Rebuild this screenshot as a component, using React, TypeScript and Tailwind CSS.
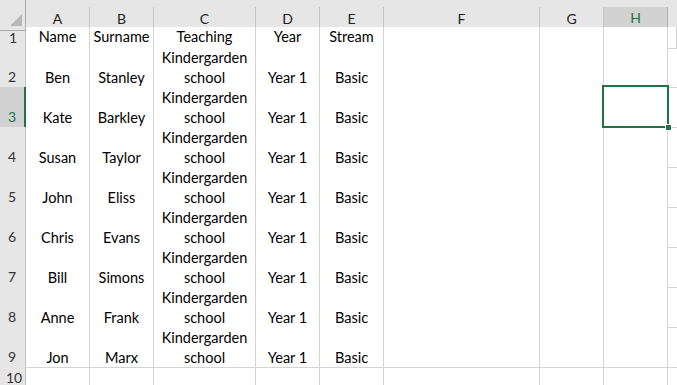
import React from "react";

type Row = [string, string, string, string, string];

const rows: Row[] = [
  ["Ben", "Stanley", "Kindergarden school", "Year 1", "Basic"],
  ["Kate", "Barkley", "Kindergarden school", "Year 1", "Basic"],
  ["Susan", "Taylor", "Kindergarden school", "Year 1", "Basic"],
  ["John", "Eliss", "Kindergarden school", "Year 1", "Basic"],
  ["Chris", "Evans", "Kindergarden school", "Year 1", "Basic"],
  ["Bill", "Simons", "Kindergarden school", "Year 1", "Basic"],
  ["Anne", "Frank", "Kindergarden school", "Year 1", "Basic"],
  ["Jon", "Marx", "Kindergarden school", "Year 1", "Basic"],
];

const cols = ["A", "B", "C", "D", "E", "F", "G", "H"];
const gridCols =
  "grid grid-cols-[26px_64px_64px_102px_64px_64px_156px_64px_64px_1fr]";

const cell = "border-r border-b border-[#d4d4d4] bg-white";

const App: React.FC = () => {
  return (
    <div
      className="w-[677px] h-[385px] overflow-hidden bg-white text-[14.5px] text-black select-none"
      style={{ fontFamily: "Lato, 'Open Sans', sans-serif" }}
    >
      {/* column headers */}
      <div className={`${gridCols} h-[27px] bg-[#e6e6e6]`}>
        <div className="relative border-r border-b border-[#ababab]">
          <div className="absolute right-[3px] bottom-[4px] w-0 h-0 border-l-[12px] border-l-transparent border-b-[12px] border-b-[#b7b7b7]" />
        </div>
        {cols.map((c) => (
          <div key={c} className="flex flex-col border-b border-[#ababab]">
            <div className="h-[7px]" />
            {c === "H" ? (
              <div className="flex-1 flex items-center justify-center bg-[#d2d2d2] border-r border-[#ababab] border-b-2 border-b-[#217346] text-[#217346] text-[14px]">
                {c}
              </div>
            ) : (
              <div className="flex-1 flex items-center justify-center border-r border-[#c6c6c6] text-[#222] text-[14px]">
                {c}
              </div>
            )}
          </div>
        ))}
        <div className="flex flex-col border-b border-[#ababab]">
          <div className="h-[7px]" />
          <div className="flex-1" />
        </div>
      </div>

      {/* row 1 */}
      <div className={`${gridCols} h-[20px]`}>
        <div className="flex items-center pl-[9px] bg-[#e6e6e6] border-r border-b border-[#c6c6c6] text-[#333] text-[14px]">
          1
        </div>
        {["Name", "Surname", "Teaching", "Year", "Stream", "", "", "", ""].map(
          (t, i) => (
            <div
              key={i}
              className={`${cell} flex items-center justify-center leading-none`}
            >
              {t}
            </div>
          )
        )}
        <div className="border-b border-[#d4d4d4]" />
      </div>

      {rows.map((r, idx) => {
        const n = idx + 2;
        const active = n === 3;
        return (
          <div key={n} className={`${gridCols} h-[40px]`}>
            <div
              className={`flex items-end pl-[8px] border-b border-[#c6c6c6] text-[14px] leading-[20px] ${
                active
                  ? "bg-[#d2d2d2] border-r-2 border-r-[#217346] text-[#217346]"
                  : "bg-[#e6e6e6] border-r text-[#333]"
              }`}
            >
              {n}
            </div>
            {r.map((t, i) => (
              <div
                key={i}
                className={`${cell} flex items-end justify-center text-center leading-[20px]`}
              >
                <span className="translate-y-[1px]">
                  {i === 2 ? (
                    <>
                      Kindergarden
                      <br />
                      school
                    </>
                  ) : (
                    t
                  )}
                </span>
              </div>
            ))}
            <div className={cell} />
            <div className={cell} />
            <div className={`${cell} relative`}>
              {active && (
                <div className="absolute z-10 left-[-2px] top-[-2px] w-[67px] h-[43px] border-2 border-[#217346]">
                  <div className="absolute right-[-5px] bottom-[-5px] w-[7px] h-[7px] bg-[#217346] border border-white" />
                </div>
              )}
            </div>
            <div className="border-b border-[#d4d4d4]" />
          </div>
        );
      })}

      {/* row 10 */}
      <div className={`${gridCols} h-[20px]`}>
        <div className="flex items-end pl-[6px] bg-[#e6e6e6] border-r border-[#c6c6c6] text-[#333] text-[14px]">
          10
        </div>
        {cols.map((c) => (
          <div key={c} className="border-r border-[#d4d4d4]" />
        ))}
        <div />
      </div>
    </div>
  );
};

export default App;
